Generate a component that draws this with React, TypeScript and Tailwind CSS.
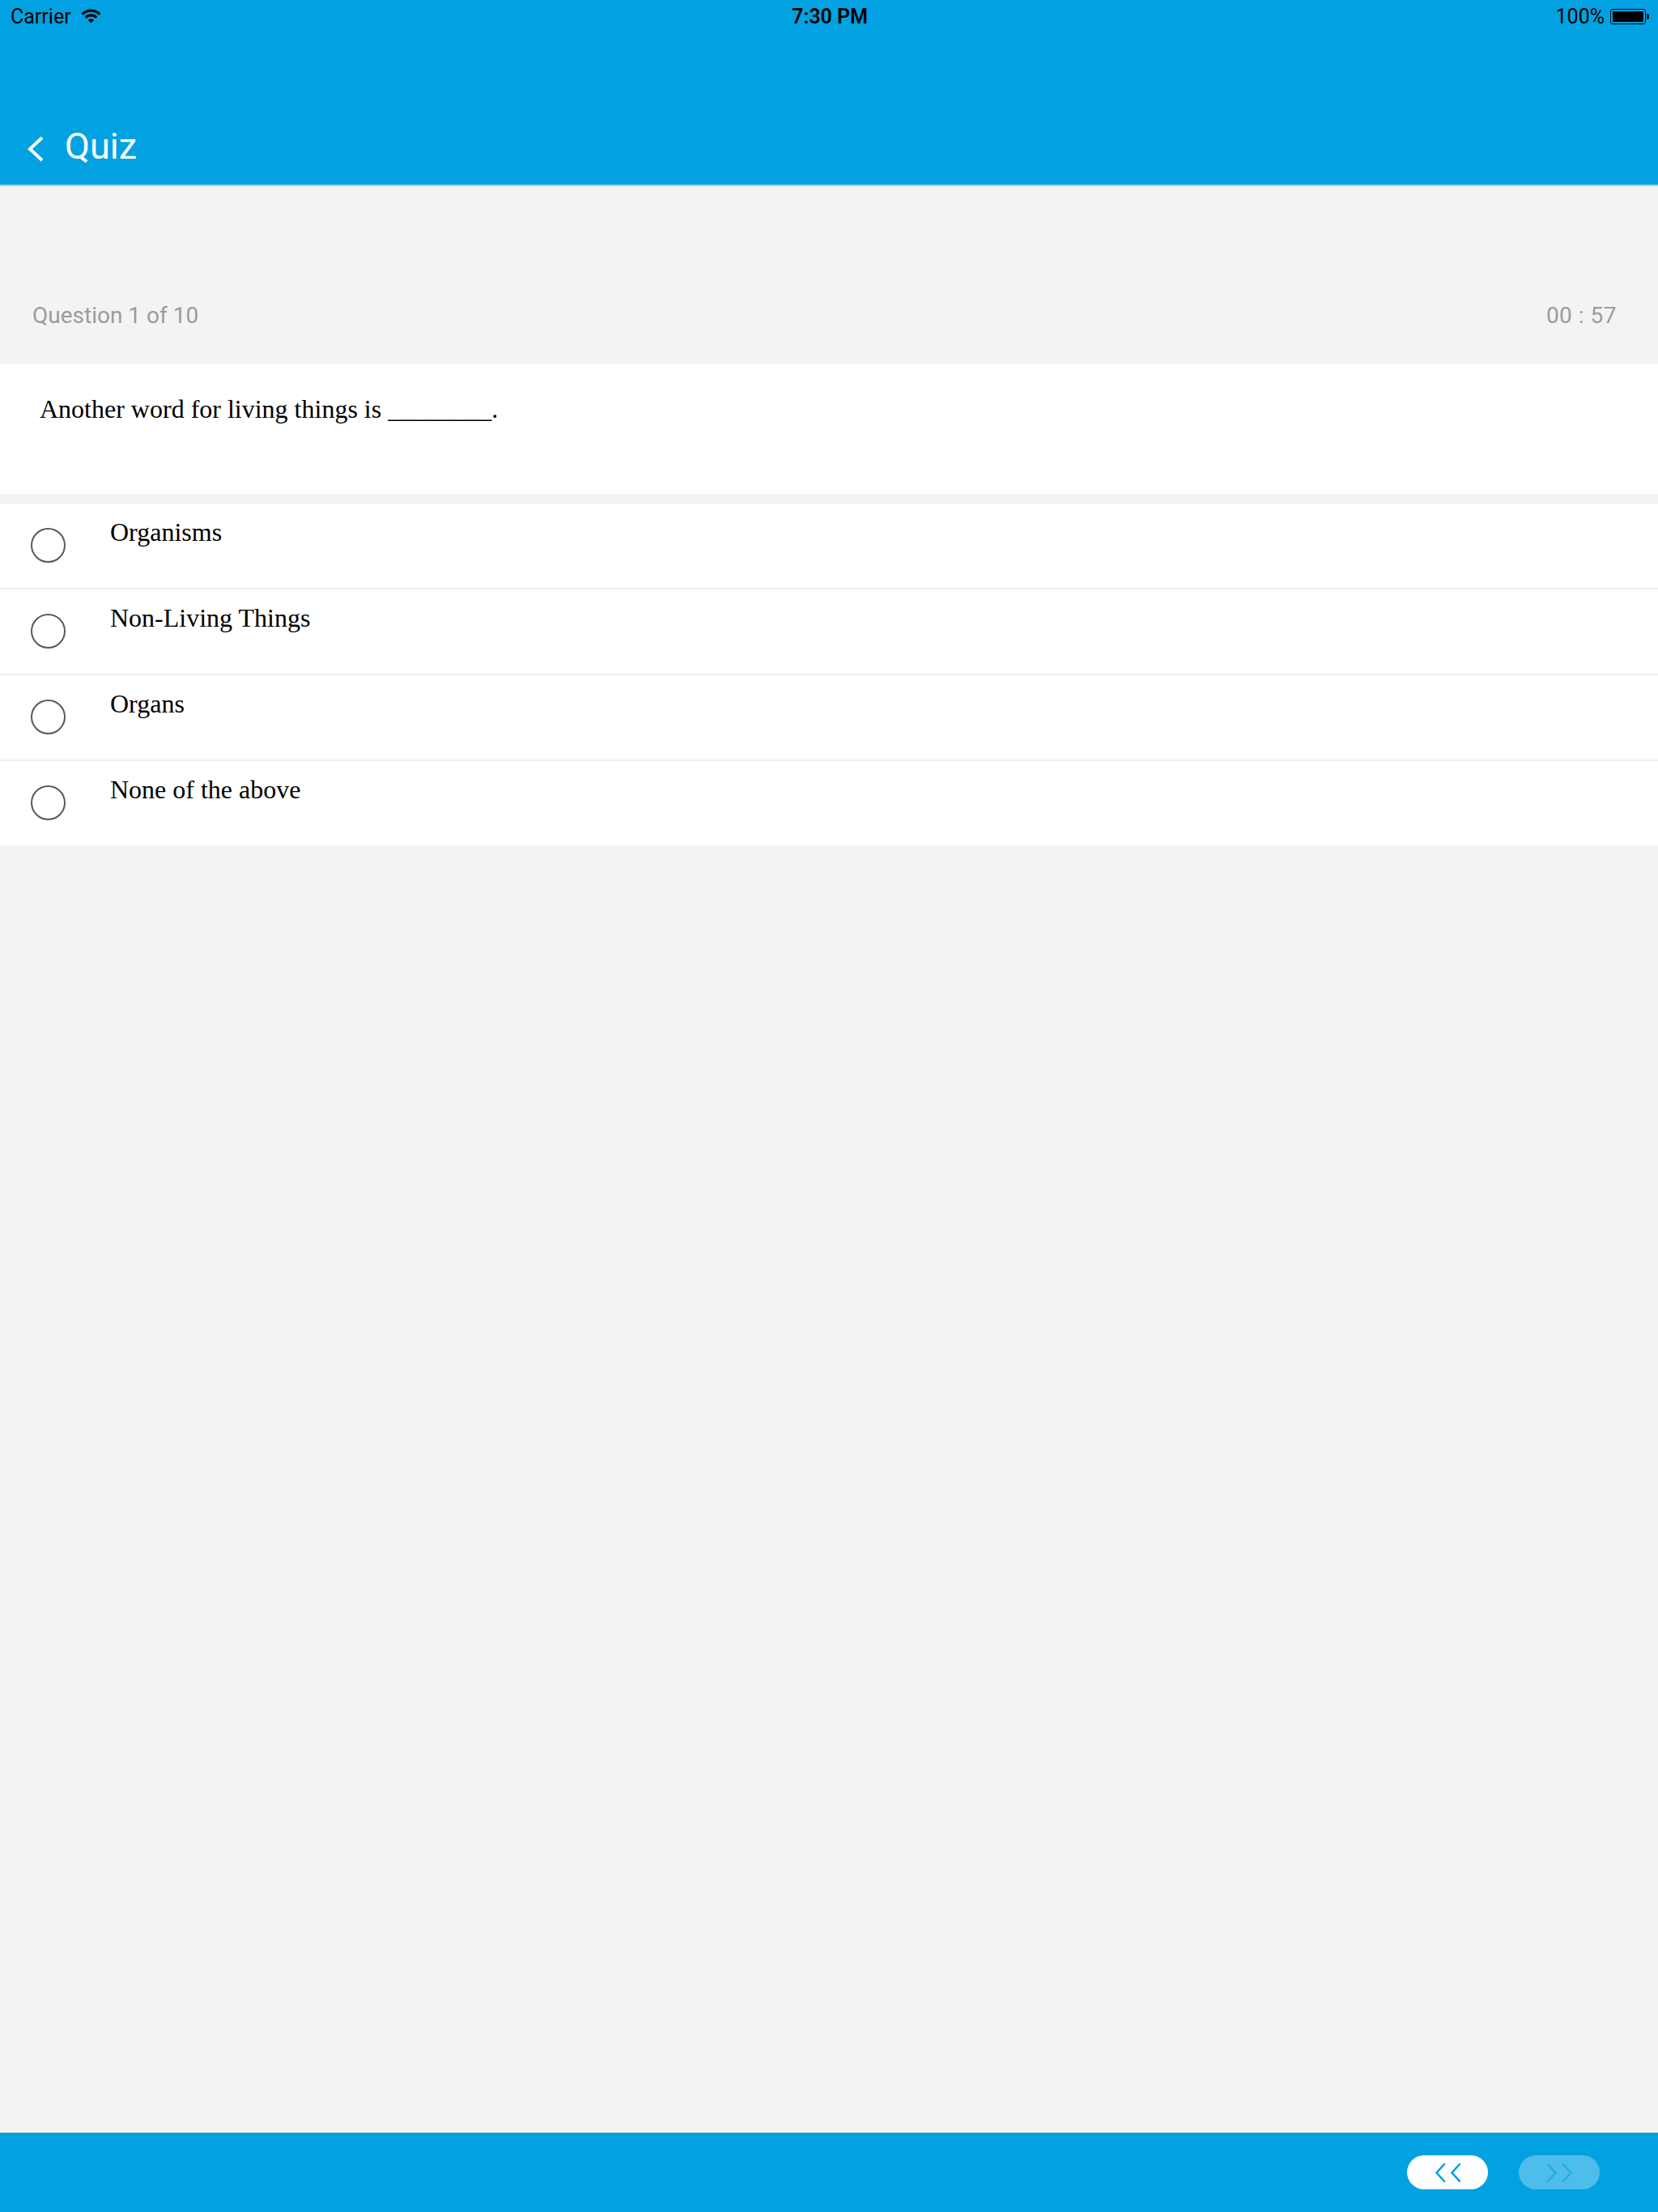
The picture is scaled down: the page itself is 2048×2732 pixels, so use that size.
import React from "react";

const options = ["Organisms", "Non-Living Things", "Organs", "None of the above"];

function WifiIcon() {
  return (
    <svg width="27" height="18" viewBox="0 0 25 17" fill="#000">
      <path d="M12.5 16.5 L8.96 12.96 A5 5 0 0 1 16.04 12.96 Z" />
      <path d="M7.2 11.2 L5.08 9.08 A10.5 10.5 0 0 1 19.92 9.08 L17.8 11.2 A7.5 7.5 0 0 0 7.2 11.2 Z" />
      <path d="M3.31 7.31 L1.19 5.19 A16 16 0 0 1 23.81 5.19 L21.69 7.31 A13 13 0 0 0 3.31 7.31 Z" />
    </svg>
  );
}

function Battery() {
  return (
    <div className="flex items-center">
      <div className="w-[44px] h-[19px] rounded-[3px] border-[1.5px] border-black p-[2px]">
        <div className="w-full h-full bg-black rounded-[1px]" />
      </div>
      <div className="w-[3px] h-[7px] bg-black rounded-r-[2px] ml-[1px]" />
    </div>
  );
}

function Chevrons({ dir, color }: { dir: "left" | "right"; color: string }) {
  const d =
    dir === "left"
      ? "M11 1 L1.5 11.5 L11 22 M30 1 L20.5 11.5 L30 22"
      : "M1 1 L10.5 11.5 L1 22 M20 1 L29.5 11.5 L20 22";
  return (
    <svg width="31" height="23" viewBox="0 0 31 23" fill="none">
      <path d={d} stroke={color} strokeWidth="2.6" strokeLinecap="square" />
    </svg>
  );
}

export default function App() {
  return (
    <div className="h-screen flex flex-col bg-[#f3f3f3] font-['Roboto','Liberation_Sans',sans-serif]">
      {/* header */}
      <div className="bg-[#02a2e2] h-[228px] flex flex-col">
        <div className="h-[40px] flex items-center text-[25px] text-black leading-none">
          <div className="flex-1 flex items-center gap-[11px] pl-[13px]">
            <span>Carrier</span>
            <WifiIcon />
          </div>
          <div className="font-semibold">7:30 PM</div>
          <div className="flex-1 flex items-center justify-end gap-[7px] pr-[11px]">
            <span>100%</span>
            <Battery />
          </div>
        </div>
        <div className="flex-1 flex items-end pl-[34px] pb-[25px]">
          <div className="flex items-center gap-[26px]">
            <svg width="20" height="32" viewBox="0 0 20 32" fill="none" className="mt-[6px]">
              <path d="M18 2 L3 16 L18 30" stroke="#fff" strokeWidth="4" />
            </svg>
            <span className="text-white text-[45px] leading-none">Quiz</span>
          </div>
        </div>
      </div>
      <div className="h-[2px] bg-[#c6c6c6]" />

      {/* question header */}
      <div className="h-[220px] flex items-end justify-between px-[40px] pr-[51px] pb-[46px] text-[28px] leading-[28px] text-[#9b9b9b]">
        <span>Question 1 of 10</span>
        <span className="tracking-[0.5px]">00 : 57</span>
      </div>

      {/* question */}
      <div className="bg-white h-[160px] pl-[49px] pt-[39px] font-['Liberation_Serif','Times_New_Roman',serif] text-[32px] leading-[32px] text-black">
        Another word for living things is ________.
      </div>

      {/* options */}
      <div className="mt-[12px] bg-white flex flex-col font-['Liberation_Serif','Times_New_Roman',serif]">
        {options.map((opt, i) => (
          <div
            key={opt}
            className={`flex items-start pl-[38px] ${i < options.length - 1 ? "h-[106px] border-b-2 border-[#efefef]" : "h-[104px]"}`}
          >
            <div className="w-[43px] h-[43px] rounded-full border-2 border-[#5a5a5a] mt-[30px] shrink-0" />
            <span className="ml-[55px] pt-[19px] text-[32px] leading-[32px] text-black">{opt}</span>
          </div>
        ))}
      </div>

      <div className="flex-1" />

      {/* bottom bar */}
      <div className="h-[98px] bg-[#02a2e2] flex items-center justify-end gap-[38px] pr-[72px]">
        <button className="w-[100px] h-[42px] rounded-full bg-white flex items-center justify-center">
          <Chevrons dir="left" color="#02a2e2" />
        </button>
        <button className="w-[100px] h-[42px] rounded-full bg-[#4ebdeb] flex items-center justify-center">
          <Chevrons dir="right" color="#26ace6" />
        </button>
      </div>
    </div>
  );
}
